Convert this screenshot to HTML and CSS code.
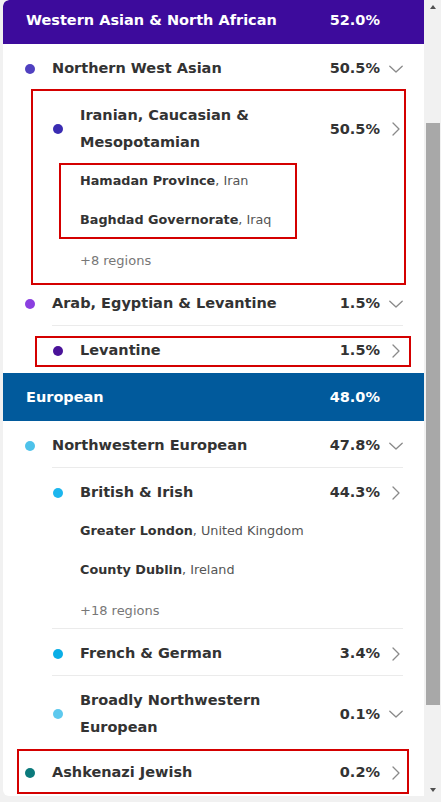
FILE: index.html
```html
<!DOCTYPE html>
<html lang="en">
<head>
<meta charset="utf-8">
<title>Ancestry composition</title>
<link rel="stylesheet" href="styles.css">
</head>
<body>
<div class="frame">
  <div class="card">
    <div class="group-head purple">
      <span class="gname">Western Asian &amp; North African</span>
      <span class="gpct">52.0%</span>
    </div>

    <div class="row">
      <div class="row-head">
        <span class="dot c-nwa"></span>
        <span class="name">Northern West Asian</span>
        <span class="pct">50.5%</span>
        <svg class="chev" viewBox="0 0 14 14"><path d="M0.8 4.2 L7 10 L13.2 4.2"/></svg>
      </div>
    </div>

    <div class="row l2 has-places last">
      <div class="row-head">
        <span class="dot c-icm"></span>
        <span class="name">Iranian, Caucasian &amp; Mesopotamian</span>
        <span class="pct">50.5%</span>
        <svg class="chev" viewBox="0 0 14 14"><path d="M4 1 L10 7 L4 13"/></svg>
      </div>
      <ul class="places">
        <li><b>Hamadan Province</b>, Iran</li>
        <li><b>Baghdad Governorate</b>, Iraq</li>
        <li class="more">+8 regions</li>
      </ul>
    </div>

    <div class="row">
      <div class="row-head">
        <span class="dot c-ael"></span>
        <span class="name">Arab, Egyptian &amp; Levantine</span>
        <span class="pct">1.5%</span>
        <svg class="chev" viewBox="0 0 14 14"><path d="M0.8 4.2 L7 10 L13.2 4.2"/></svg>
      </div>
    </div>

    <div class="row l2 last">
      <div class="row-head">
        <span class="dot c-lev"></span>
        <span class="name">Levantine</span>
        <span class="pct">1.5%</span>
        <svg class="chev" viewBox="0 0 14 14"><path d="M4 1 L10 7 L4 13"/></svg>
      </div>
    </div>

    <div class="group-head blue">
      <span class="gname">European</span>
      <span class="gpct">48.0%</span>
    </div>

    <div class="row">
      <div class="row-head">
        <span class="dot c-nwe"></span>
        <span class="name">Northwestern European</span>
        <span class="pct">47.8%</span>
        <svg class="chev" viewBox="0 0 14 14"><path d="M0.8 4.2 L7 10 L13.2 4.2"/></svg>
      </div>
    </div>

    <div class="row l2 has-places">
      <div class="row-head">
        <span class="dot c-bri"></span>
        <span class="name">British &amp; Irish</span>
        <span class="pct">44.3%</span>
        <svg class="chev" viewBox="0 0 14 14"><path d="M4 1 L10 7 L4 13"/></svg>
      </div>
      <ul class="places">
        <li><b>Greater London</b>, United Kingdom</li>
        <li><b>County Dublin</b>, Ireland</li>
        <li class="more">+18 regions</li>
      </ul>
    </div>

    <div class="row l2">
      <div class="row-head">
        <span class="dot c-frg"></span>
        <span class="name">French &amp; German</span>
        <span class="pct">3.4%</span>
        <svg class="chev" viewBox="0 0 14 14"><path d="M4 1 L10 7 L4 13"/></svg>
      </div>
    </div>

    <div class="row l2 last tight">
      <div class="row-head">
        <span class="dot c-bnw"></span>
        <span class="name">Broadly Northwestern European</span>
        <span class="pct">0.1%</span>
        <svg class="chev" viewBox="0 0 14 14"><path d="M0.8 4.2 L7 10 L13.2 4.2"/></svg>
      </div>
    </div>

    <div class="row last">
      <div class="row-head">
        <span class="dot c-ash"></span>
        <span class="name">Ashkenazi Jewish</span>
        <span class="pct">0.2%</span>
        <svg class="chev" viewBox="0 0 14 14"><path d="M4 1 L10 7 L4 13"/></svg>
      </div>
    </div>
  </div>

  <div class="scrollbar">
    <div class="sb-btn"><span class="tri-up"></span></div>
    <div class="sb-gap-top"></div>
    <div class="sb-thumb"></div>
    <div class="sb-gap-bottom"></div>
    <div class="sb-btn"><span class="tri-down"></span></div>
  </div>

  <div class="mark m1"></div>
  <div class="mark m2"></div>
  <div class="mark m3"></div>
  <div class="mark m4"></div>
</div>
</body>
</html>
```

FILE: styles.css
```css
* { box-sizing: border-box; }

html, body {
  margin: 0;
  padding: 0;
  background: #f1f1f1;
}

body {
  font-family: "DejaVu Sans", "Liberation Sans", sans-serif;
  color: #333333;
}

.frame {
  position: relative;
  display: flex;
  align-items: flex-start;
  width: 441px;
  height: 802px;
  overflow: hidden;
}

.card {
  width: 421px;
  height: 796px;
  margin-left: 3px;
  background: #ffffff;
  border-radius: 6px 0 0 6px;
  overflow: hidden;
  flex: none;
}

.group-head {
  display: flex;
  align-items: center;
  justify-content: space-between;
  padding: 0 44px 0 23px;
  color: #ffffff;
  font-weight: bold;
  font-size: 14.5px;
  line-height: 27px;
}

.group-head.purple {
  height: 44px;
  padding-bottom: 3px;
  background: #3d0b9c;
  border-top-left-radius: 6px;
}

.group-head.blue {
  height: 48px;
  background: #015a9c;
}

.row {
  margin: 0 21px 0 49px;
  padding: 11px 0 8px 0;
  border-bottom: 1px solid #ebebeb;
}

.row.l2 { padding-left: 28px; }
.row.has-places { padding-bottom: 0; }
.row.last { border-bottom-color: transparent; }
.row.tight { padding-bottom: 6px; }

.row-head {
  display: flex;
  align-items: center;
}

.dot {
  flex: none;
  width: 10px;
  height: 10px;
  border-radius: 50%;
  margin-left: -27px;
  margin-right: 17px;
}

.c-nwa { background: #5040c0; }
.c-icm { background: #3a2cb2; }
.c-ael { background: #8b3fe0; }
.c-lev { background: #4a1399; }
.c-nwe { background: #4ec2ea; }
.c-bri { background: #1cb6ee; }
.c-frg { background: #0aaee6; }
.c-bnw { background: #5ec9ee; }
.c-ash { background: #0b7a7c; }

.name {
  flex: 1;
  min-width: 0;
  padding-right: 16px;
  font-weight: bold;
  font-size: 14.5px;
  line-height: 27px;
  color: #333333;
}

.pct {
  flex: none;
  font-weight: bold;
  font-size: 14.5px;
  line-height: 27px;
  color: #333333;
}

.chev {
  flex: none;
  width: 14px;
  height: 14px;
  margin-left: 9px;
}

.chev path {
  fill: none;
  stroke: #8a8a8a;
  stroke-width: 1.3;
  stroke-linecap: round;
  stroke-linejoin: round;
}

.places {
  list-style: none;
  margin: 0;
  padding: 5px 0 0 0;
  font-size: 12.8px;
  line-height: 39px;
  color: #555555;
}

.places b {
  color: #333333;
  font-weight: bold;
}

.places .more {
  color: #777777;
  font-size: 13px;
  margin-top: 2px;
  margin-bottom: -2px;
}

/* scrollbar */
.scrollbar {
  flex: none;
  width: 17px;
  height: 802px;
  display: flex;
  flex-direction: column;
  background: #f1f1f1;
  padding-bottom: 4px;
}

.sb-btn {
  flex: none;
  height: 17px;
  display: flex;
  align-items: center;
  justify-content: center;
}

.tri-up {
  width: 0;
  height: 0;
  border-left: 3.5px solid transparent;
  border-right: 3.5px solid transparent;
  border-bottom: 4px solid #505050;
  margin-top: -4px;
}

.tri-down {
  width: 0;
  height: 0;
  border-left: 3.5px solid transparent;
  border-right: 3.5px solid transparent;
  border-top: 4px solid #505050;
}

.sb-gap-top { flex: none; height: 106px; }

.sb-thumb {
  flex: none;
  height: 582px;
  margin: 0 1px 0 2px;
  background: #a8a8a8;
}

.sb-gap-bottom { flex: 1; }

/* red annotation boxes over the content */
.mark {
  position: absolute;
  border: 2px solid #d40000;
  pointer-events: none;
}

.m1 { left: 31px; top: 89px; width: 375px; height: 196px; }
.m2 { left: 59px; top: 163px; width: 238px; height: 76px; }
.m3 { left: 35px; top: 336px; width: 376px; height: 31px; }
.m4 { left: 17px; top: 749px; width: 392px; height: 45px; }
```
